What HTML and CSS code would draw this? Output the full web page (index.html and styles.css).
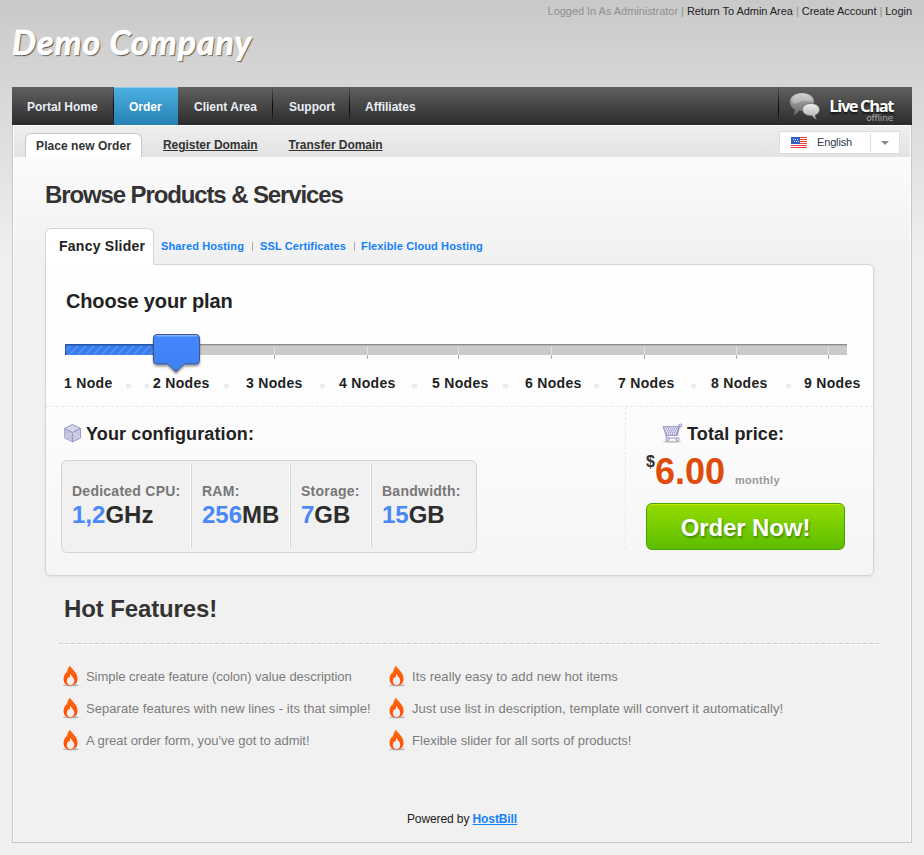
FILE: index.html
```html
<!DOCTYPE html>
<html lang="en">
<head>
<meta charset="utf-8">
<title>Demo Company - Order</title>
<link rel="stylesheet" href="styles.css">
</head>
<body>
<svg class="defs" width="0" height="0">
  <defs>
    <linearGradient id="fire" x1="0" y1="0" x2="0" y2="1"><stop offset="0" stop-color="#ff6a10"/><stop offset="1" stop-color="#ff4a00"/></linearGradient>
    <linearGradient id="bubbleA" x1="0" y1="0" x2="0" y2="1"><stop offset="0" stop-color="#cfcfcf"/><stop offset=".5" stop-color="#8c8c8c"/><stop offset="1" stop-color="#666"/></linearGradient>
    <linearGradient id="bubbleB" x1="0" y1="0" x2="0" y2="1"><stop offset="0" stop-color="#eee"/><stop offset="1" stop-color="#aaa"/></linearGradient>
    <linearGradient id="handle" x1="0" y1="0" x2="0" y2="1"><stop offset="0" stop-color="#4388ff"/><stop offset="1" stop-color="#4080f2"/></linearGradient>
    <filter id="soft" x="-20%" y="-100%" width="140%" height="300%"><feGaussianBlur stdDeviation=".7"/></filter>
    <symbol id="flame" viewBox="0 0 18 23">
      <ellipse cx="9" cy="20.300" rx="7.800" ry="1" fill="#999" opacity=".7" filter="url(#soft)"/>
      <path d="M8 .5C8.500 3 15.500 7 15.500 13.500c0 4-2.200 6.700-5.700 7H7.500C4 20.200 1.600 18 1.600 14c0-3 1.200-5 2.600-6.800l.6.800C5.200 5.200 6 3 8 .5Z" fill="url(#fire)"/>
      <path d="M8.300 8.300C9 11 12.300 12.700 12.300 16c0 2.600-1.500 4-3.700 4s-3.800-1.400-3.800-4c0-1.800.9-2.800 1.500-4l.9 1.200c.6-1.500.9-2.800 1.100-4.900Z" fill="#f4f0f2"/>
    </symbol>
  </defs>
</svg>
<header class="top">
  <div class="links">Logged In As Administrator | <a>Return To Admin Area</a> | <a>Create Account</a> | <a>Login</a></div>
  <div class="logo">Demo Company</div>
</header>
<nav class="nav">
  <a class="n1">Portal Home</a><a class="n2 active">Order</a><a class="n3">Client Area</a><a class="n4">Support</a><a class="n5">Affiliates</a>
  <div class="chat">
    <svg width="33" height="30" viewBox="0 0 33 30">
      <path d="M14 1c7 0 12 3.600 12 8.500S21 19 14 19c-1 0-2 0-3-.3-1.500 2.300-3.500 4-6 4.800 1.300-1.600 2-3.700 1.800-6C3.500 16 2 13 2 9.500 2 4.600 7 1 14 1Z" fill="url(#bubbleA)"/>
      <path d="M4 8c2-5 7-6 11-6 5 0 9 3 10 7-3 2-9-3-16 2-2 1.500-5 .5-5-3Z" fill="#d8d8d8" opacity=".45"/>
      <path d="M23 11.500c5 0 8.500 2.700 8.500 6.200 0 2.500-1.700 4.500-4.300 5.500.1 1.800.6 3.200 1.600 4.400-2.300-.6-3.700-2-4.600-3.800-5.400.2-9.700-2.300-9.700-6.100s3.500-6.200 8.500-6.200Z" fill="url(#bubbleB)" stroke="#555" stroke-width=".6"/>
    </svg>
    <div class="chat-text"><b>Live Chat</b><small>offline</small></div>
  </div>
</nav>
<main class="wrap">
  <div class="sub">
    <a class="subtab">Place new Order</a><a class="s2">Register Domain</a><a class="s3">Transfer Domain</a>
    <div class="lang">
      <svg class="flag" width="16" height="11" viewBox="0 0 16 11" shape-rendering="crispEdges"><path fill="#fff" d="M0 0h16v11H0z"/><path d="M0 0h16v1H0zM0 2h16v1H0zM0 4h16v1H0zM0 6h16v1H0zM0 8h16v1H0zM0 10h16v1H0z" fill="#f0413c"/><path fill="#2d61c8" d="M0 0h9v7H0z"/><path d="M2 2h1v1H2zM4 2h1v1H4zM6 2h1v1H6zM3 4h1v1H3zM5 4h1v1H5zM7 4h1v1H7z" fill="#e4ecff"/></svg>
      <span>English</span><i class="arrow"></i>
    </div>
  </div>
  <section class="content">
    <h1>Browse Products &amp; Services</h1>
    <div class="tabs">
      <span class="tab">Fancy Slider</span>
      <a class="t1">Shared Hosting</a><i></i><a class="t2">SSL Certificates</a><i></i><a class="t3">Flexible Cloud Hosting</a>
    </div>
    <div class="card">
      <div class="plan">
        <h2>Choose your plan</h2>
        <svg class="slider" width="790" height="46" viewBox="0 0 790 46">
          <defs>
            <pattern id="stripe" width="8" height="11" patternUnits="userSpaceOnUse" y="12"><path fill="#397cee" d="M0 0h8v11H0z"/><path d="M-3 11L8 0M5 11L16 0M-11 11L0 0" stroke="#5390f4" stroke-width="1.700"/></pattern>
            <filter id="shade" x="-20%" y="-20%" width="140%" height="150%"><feDropShadow dx="0" dy="2" stdDeviation="1" flood-opacity=".4"/></filter>
          </defs>
          <path fill="#cacaca" d="M1 12h782v11H1z"/><path fill="#8d8d8d" d="M1 12h782v1H1z"/><path fill="#b5b5b5" d="M1 13h782v1H1z"/>
          <path fill="url(#stripe)" d="M1 12h100v11H1z"/><path d="M101 12.500H1.500V23" fill="none" stroke="#2454a0"/><path d="M2 13.500h99" stroke="#326bcd"/>
          <path d="M210.500 14v9M303.500 14v9M394.500 14v9M487.500 14v9M580.500 14v9M672.500 14v9M764.500 14v9" stroke="#e0e0e0"/>
          <path d="M210.500 23v4M303.500 23v4M394.500 23v4M487.500 23v4M580.500 23v4M672.500 23v4M764.500 23v4" stroke="#aaa"/>
          <path d="M93 2.500h39q3.500 0 3.500 3.500v22.500q0 3.500-3.500 3.500h-11.500l-8.500 7.800-8.500-7.800H93q-3.500 0-3.500-3.500V6q0-3.500 3.500-3.500Z" fill="url(#handle)" stroke="#435489" filter="url(#shade)"/>
          <path d="M92 3.800h41" stroke="#7fafff" stroke-width="1.500"/>
        </svg>
        <div class="nodes"><span>1 Node</span><span>2 Nodes</span><span>3 Nodes</span><span>4 Nodes</span><span>5 Nodes</span><span>6 Nodes</span><span>7 Nodes</span><span>8 Nodes</span><span>9 Nodes</span>
          <svg class="dots" width="800" height="6"><g fill="#ebebeb"><circle cx="64.500" cy="3" r="2.600"/><circle cx="83" cy="3" r="2.300"/><circle cx="162.500" cy="3" r="2.600"/><circle cx="258.500" cy="3" r="2.600"/><circle cx="350.500" cy="3" r="2.600"/><circle cx="441.500" cy="3" r="2.600"/><circle cx="532.500" cy="3" r="2.600"/><circle cx="629.500" cy="3" r="2.600"/><circle cx="724.500" cy="3" r="2.600"/></g></svg>
        </div>
      </div>
      <div class="summary">
        <div class="config">
          <h3><svg width="19" height="20" viewBox="0 0 19 20"><path d="M9.500 1.500l8 4v9.500l-8 4-8-4V5.500Z" fill="#c9c8df" stroke="#9b99c1"/><path d="M9.500 1.500l8 4-8 4-8-4Z" fill="#d4d3e7" stroke="#a6a4ca"/><path d="M1.500 5.500l8 4V19l-8-4Z" fill="#c2c1da"/><path d="M9.500 9.500V19M1.500 5.500l8 4 8-4" fill="none" stroke="#9997c2"/><path d="M9.500 2v7M2 14.500l7.500-4.500 7.500 4.500" stroke="#e1e1f0" fill="none" opacity=".6"/></svg>Your configuration:</h3>
          <div class="specs">
            <div class="c1">Dedicated CPU:<b><em>1,2</em>GHz</b></div>
            <div class="c2">RAM:<b><em>256</em>MB</b></div>
            <div class="c3">Storage:<b><em>7</em>GB</b></div>
            <div class="c4">Bandwidth:<b><em>15</em>GB</b></div>
          </div>
        </div>
        <div class="total">
          <h3><svg width="21" height="20" viewBox="0 0 21 20"><ellipse cx="10" cy="18.700" rx="9" ry="1" fill="#aaa" opacity=".7" filter="url(#soft)"/><path d="M1 3.500h15.500L15 12.500H4Z" fill="#e0dfee" stroke="#9d9bcb"/><path d="M2 5.500h14M3 7.500h12M4 9.500h11M4 11.500h11" stroke="#a5a3ce" stroke-dasharray="1 1"/><path d="M3 4.500h13M2 6.500h13M3 8.500h12M4 10.500h11" stroke="#b5b3d8" stroke-dasharray="1 1"/><path d="M15 12.500L17.500 3" fill="none" stroke="#9694c8" stroke-width="1.300"/><circle cx="18.300" cy="2.500" r="1.500" fill="#e0dfee" stroke="#8e8cc3"/><path d="M4 12.500l1 2.500h10.500" fill="none" stroke="#9694c8"/><circle cx="5.500" cy="16.300" r="1.500" fill="#eee" stroke="#8e8cc3"/><circle cx="15.500" cy="16.300" r="1.500" fill="#eee" stroke="#8e8cc3"/></svg>Total price:</h3>
          <div class="price"><sup>$</sup><strong>6.00</strong><span>monthly</span></div>
          <button>Order Now!</button>
        </div>
      </div>
    </div>
    <h2 class="hot">Hot Features!</h2>
    <svg class="rule" width="820" height="2"><path d="M0 .5h820" stroke="#ccc" stroke-dasharray="4 2"/><path d="M0 1.500h820" stroke="#fff" stroke-dasharray="4 2"/></svg>
    <ul class="features">
      <li><svg width="18" height="23"><use href="#flame"/></svg><span class="f1">Simple create feature (colon) value description</span></li>
      <li><svg width="18" height="23"><use href="#flame"/></svg><span class="f2">Its really easy to add new hot items</span></li>
      <li><svg width="18" height="23"><use href="#flame"/></svg><span class="f3">Separate features with new lines - its that simple!</span></li>
      <li><svg width="18" height="23"><use href="#flame"/></svg><span class="f4">Just use list in description, template will convert it automatically!</span></li>
      <li><svg width="18" height="23"><use href="#flame"/></svg><span class="f5">A great order form, you've got to admit!</span></li>
      <li><svg width="18" height="23"><use href="#flame"/></svg><span class="f6">Flexible slider for all sorts of products!</span></li>
    </ul>
    <footer>Powered by <a>HostBill</a></footer>
  </section>
</main>
</body>
</html>
```
FILE: styles.css
```css
* { box-sizing: border-box; }
body { margin: 0; padding: 0 12px; height: 855px; overflow: hidden; font-family: "Liberation Sans", Arial, sans-serif; color: #333; background: linear-gradient(#c9c9c9, #d7d7d7 90px, #f0f0f0 260px) #f0f0f0; white-space: nowrap; }
.defs { position: absolute; }
h1, h2, h3 { margin: 0; }
.top { height: 87px; }
.links { height: 22px; line-height: 23px; font-size: 11px; text-align: right; color: #909090; letter-spacing: -.04px; }
.links a { color: #222; }
.logo { font: italic bold 34px/40px Lato, sans-serif; color: #fff; text-shadow: 1px 1px 1px #333; letter-spacing: .95px; -webkit-text-stroke: .7px #fff; }
.nav { height: 38px; display: flex; background: linear-gradient(#606060, #2b2b2b); font-weight: bold; font-size: 12px; line-height: 41px; color: #e8eef5; }
.nav > a { padding-left: 15px; border-right: 1px solid; border-image: linear-gradient(#555, #080808 50%, #333) 1; }
.n1 { width: 102px; }
.n2 { width: 64px; }
.n3 { width: 95px; }
.n4 { width: 77px; }
.nav > .n3, .nav > .n4 { padding-left: 16px; }
.nav > .n5 { padding-left: 15px; border: 0; }
.nav > .active { background: linear-gradient(#4eb1e3, #2680b3); border: 0; box-shadow: inset 0 1px #8bcdef; color: #fff; }
.chat { margin-left: auto; width: 134px; display: flex; border-left: 1px solid; border-image: linear-gradient(#555, #080808 50%, #333) 1; padding: 5px 0 0 9px; }
.chat-text { width: 74px; margin-left: -2px; text-align: right; }
.chat b { display: block; font: bold 16.5px/17px "Open Sans", sans-serif; padding-top: 5px; letter-spacing: -1.4px; color: #fff; text-shadow: 0 2px 2px #111; }
.chat small { display: block; font: 9px/9px "DejaVu Sans", sans-serif; letter-spacing: -.2px; color: #aaa; }
.wrap { height: 718px; border: 1px solid #c6c6c6; border-top: 0; padding: 1px 1px 0; background: #fff; }
.sub { height: 31px; display: flex; padding-left: 11px; background: linear-gradient(#eee, #e3e3e3); font-size: 12px; font-weight: bold; letter-spacing: -.05px; }
.subtab { width: 117px; height: 24px; margin-top: 7px; border: 1px solid #c8c8c8; border-bottom: 0; border-radius: 6px 6px 0 0; background: #fff; line-height: 25px; text-align: center; letter-spacing: .05px; }
.s2, .s3 { text-decoration: underline; line-height: 38px; margin-left: 21px; }
.s3 { margin-left: 31px; }
.lang { margin: 5px 10px 0 auto; width: 121px; height: 23px; border: 1px solid #ddd; background: #fff; display: flex; align-items: center; font-weight: normal; font-size: 11px; color: #333a50; padding-left: 11px; }
.flag { margin-top: -1px; }
.lang span { margin-left: 10px; width: 54px; border-right: 1px solid #ddd; line-height: 19px; letter-spacing: -.15px; }
.arrow { margin-left: 10px; border: 4px solid transparent; border-top-color: #888; border-bottom: 0; }
.content { height: 685px; padding: 0 31px; background: linear-gradient(#fbfbfb, #f1f1f1 100px); }
h1 { height: 71px; font-size: 24px; line-height: 76px; letter-spacing: -1.12px; }
.tabs { height: 37px; display: flex; position: relative; margin-bottom: -1px; align-items: center; font-size: 11px; font-weight: bold; color: #1581f8; }
.tabs a { letter-spacing: .12px; margin-top: -1px; }
.tabs .t3 { margin-left: -1px; }
.tab { width: 109px; height: 37px; border: 1px solid #d5d5d5; border-bottom: 0; border-radius: 6px 6px 0 0; background: #fff; color: #222; font-size: 14px; line-height: 35px; padding-left: 13px; letter-spacing: .25px; margin-right: 7px; }
.tabs i { width: 1px; height: 9px; background: #aaa; margin: 0 7px 0 8px; }
.card { width: 829px; height: 312px; border: 1px solid #d5d5d5; border-radius: 0 6px 6px 6px; background: linear-gradient(#fff, #fdfdfd 45%, #f5f5f5); box-shadow: 0 1px 3px #ddd; }
.plan { height: 142px; padding: 20px 18px 0; border-bottom: 1px dashed #e8e8e8; }
.plan h2 { font-size: 20px; line-height: 32px; margin-left: 2px; color: #222; letter-spacing: -.15px; }
.slider { display: block; margin-top: 15px; }
.nodes { position: relative; display: flex; margin: -3px 0 0 0; color: #222; font-size: 14px; font-weight: bold; line-height: 16px; letter-spacing: .3px; }
.nodes span { width: 93px; flex: none; }
.nodes span:first-child { width: 89px; }
.dots { position: absolute; left: 0; top: 8px; }
.summary { display: flex; height: 142px; }
.config { width: 580px; border-right: 1px dashed #e8e8e8; padding: 11px 0 0 15px; }
h3 { display: flex; align-items: center; height: 32px; font-size: 18px; color: #222; letter-spacing: .13px; }
h3 svg { margin-right: 4px; margin-left: 2px; margin-top: -2px; }
.specs { margin-top: 10px; display: flex; width: 416px; height: 93px; border: 1px solid #d5d5d5; border-radius: 6px; background: #f1f1f1; padding: 4px 0; font-size: 14px; font-weight: bold; color: #777; letter-spacing: .25px; }
.specs div { border-right: 1px solid #d5d5d5; box-shadow: inset -1px 0 #fff; padding: 18px 0 0 10px; height: 83px; line-height: 17px; }
.specs .c1 { width: 130px; }
.specs .c2 { width: 99px; }
.specs .c3 { width: 81px; }
.specs .c4 { border: 0; box-shadow: none; }
.specs b { display: block; font-size: 24px; line-height: 29px; color: #2d2d2d; letter-spacing: 0; }
.specs em { font-style: normal; color: #4989f7; }
.total { padding: 11px 0 0 20px; }
.total h3 { padding-left: 14px; }
.price { height: 53px; display: flex; font-weight: bold; }
.price sup { font-size: 16px; line-height: 24px; }
.price strong { font-size: 36px; line-height: 43px; color: #df4c0a; }
.price span { font-size: 11px; line-height: 61px; margin-left: 10px; color: #999; letter-spacing: .3px; }
button { display: block; width: 199px; height: 47px; border: 1px solid #45a000; border-radius: 6px; background: linear-gradient(#93db00, #5dbd00); box-shadow: inset 0 1px #c4e800; font: bold 24px "Liberation Sans", sans-serif; letter-spacing: -.1px; color: #fff; text-shadow: 1px 2px 2px #4b8a00; padding: 2px 0 0; }
.hot { font-size: 24px; line-height: 28px; margin: 19px 0 20px 19px; letter-spacing: -.12px; }
.rule { display: block; margin-left: 14px; }
.features { list-style: none; margin: 15px 0 0 17px; padding: 0; display: grid; grid-template-columns: 326px 1fr; grid-auto-rows: 32px; font-size: 13px; color: #7c7c7c; }
.features li { display: flex; align-items: center; gap: 6px; }
.features .f1 { letter-spacing: -.05px; }
.features .f2 { letter-spacing: .08px; }
.features .f3 { letter-spacing: .04px; }
.features .f4 { letter-spacing: .07px; }
.features .f5 { letter-spacing: -.02px; }
.features .f6 { letter-spacing: .03px; }
footer { text-align: center; font-size: 12px; margin-top: 56px; color: #222; letter-spacing: -.1px; }
footer a { color: #1581f8; text-decoration: underline; font-weight: bold; }
```
